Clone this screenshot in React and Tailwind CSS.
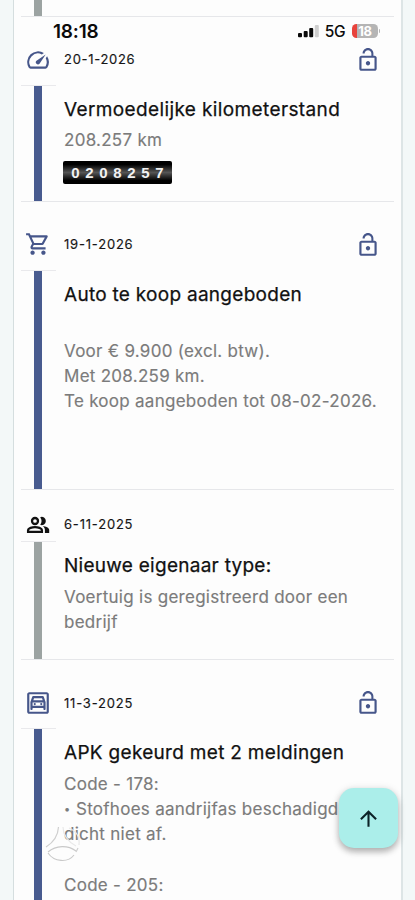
import React from "react";
import {
  MdSpeed,
  MdOutlineShoppingCart,
  MdOutlineGarage,
  MdLockOpen,
  MdArrowUpward,
} from "react-icons/md";

function PeopleIcon({ className }) {
  return (
    <svg viewBox="0 0 24 24" className={className} fill="none">
      <circle cx="9" cy="8" r="3" stroke="#111" strokeWidth="2.3" />
      <path d="M2.100 18.900V17c0-1.900 4.200-2.900 6.900-2.900s6.900 1 6.900 2.900v1.900z" stroke="#111" strokeWidth="2.300" />
      <path d="M14.200 4.200A4.100 4.100 0 1 1 14.200 11.800a6.500 6.500 0 0 0 0-7.600z" fill="#111" />
      <path d="M16.700 13c3 .4 6.500 1.800 6.500 4v3.100h-4.300V17c0-1.700-.9-3-2.200-4z" fill="#111" />
    </svg>
  );
}

function StatusBar() {
  return (
    <div className="absolute left-[53px] top-[19px] flex h-6 w-[327px] items-center justify-between">
      <span className="pt-px text-[19px] font-semibold leading-6 tracking-[-0.2px] text-[#0b0b0b]">18:18</span>
      <div className="flex items-center">
        <svg width="21" height="14" viewBox="0 0 21 14" className="mr-[6px]">
          <rect x="0" y="9" width="4" height="4.2" rx="1" fill="#0b0b0b" />
          <rect x="5.7" y="7" width="4" height="6.2" rx="1" fill="#0b0b0b" />
          <rect x="11.2" y="4" width="4" height="9.2" rx="1" fill="#0b0b0b" />
          <rect x="16.8" y="1" width="4" height="12.2" rx="1" fill="#cfcfcf" />
        </svg>
        <span className="mr-[7px] pt-px text-[15.5px] font-medium leading-6 tracking-[-0.5px] text-[#0b0b0b]">5G</span>
        <div className="flex h-[14px] w-[26px] items-center justify-center rounded-[4.5px] bg-[linear-gradient(90deg,#e8433c_5px,#b5b5b5_5px)] text-[13px] font-bold leading-none tracking-[-0.3px] text-white">
          18
        </div>
        <div className="ml-px h-1 w-px rounded-r bg-[#b5b5b5]" />
      </div>
    </div>
  );
}

function Entry({ Icon, iconClass, date, dateClass, lockClass, header, height, bar, title, titleClass, children }) {
  return (
    <section>
      <div className={`flex ${header}`}>
        <div className="flex w-[35px] items-center justify-center border-b border-[#e9e9ec]">
          <Icon className={iconClass} />
        </div>
        <div className="flex flex-1 items-center justify-between pl-2 pr-[13px]">
          <span className={`relative text-[13px] text-[#161616] [-webkit-text-stroke:0.15px_#161616] ${dateClass}`}>{date}</span>
          {lockClass && <MdLockOpen className={`relative size-[26px] text-[#46568a] ${lockClass}`} />}
        </div>
      </div>
      <div className={`flex border-b border-[#e6e7ea] ${height}`}>
        <div className={`ml-[13px] w-2 shrink-0 ${bar}`} />
        <div className="flex-1 whitespace-nowrap pl-[22px] pt-[11px]">
          <h2 className={`text-[19px] leading-[26px] text-[#111] [-webkit-text-stroke:0.25px_#111] ${titleClass}`}>{title}</h2>
          {children}
        </div>
      </div>
    </section>
  );
}

const body = "text-[17px] leading-[25.2px] tracking-[0.27px] text-[#7b7b7b] [-webkit-text-stroke:0.15px_#7b7b7b]";

export default function App() {
  return (
    <div className="relative h-[900px] w-[415px] overflow-hidden bg-[#f3f8f8] font-['Inter',sans-serif]">
      <main className="ml-[13px] h-full w-[390px] overflow-hidden border-l border-r-2 border-l-[#d5dedf] border-r-[#dde5e6] bg-[#fdfdfd] pl-[7px] pr-[7px]">
        <div className="h-[17px] border-b border-[#e6e7ea]">
          <div className="ml-[13px] h-4 w-2 bg-[#9ca3a2]" />
        </div>
        <Entry
          Icon={MdSpeed}
          iconClass="relative -left-px top-[9px] size-[26px] text-[#46568a]"
          date="20-1-2026"
          dateClass="top-2 tracking-[0.7px]"
          header="h-[69px]"
          lockClass="top-[8px]"
          height="h-[116px]"
          bar="bg-[#485b8f]"
          title="Vermoedelijke kilometerstand"
          titleClass="tracking-[0.38px]"
        >
          <p className={`mt-[5px] ${body}`}>208.257 km</p>
          <div className="-ml-px mt-[8px] flex h-[23px] w-[109px] items-center justify-center rounded-[2px] bg-[linear-gradient(180deg,#000_15%,#555_50%,#000_85%)] font-['Liberation_Sans',sans-serif] text-[15px] font-bold leading-none text-[#f2f2f2]">
            {"0208257".split("").map((d, i) => (
              <span key={i} className="w-[14px] text-center">{d}</span>
            ))}
          </div>
        </Entry>
        <Entry
          Icon={MdOutlineShoppingCart}
          iconClass="relative -left-px top-[8px] size-[26px] text-[#46568a]"
          date="19-1-2026"
          dateClass="top-2 tracking-[0.8px]"
          header="h-[69px]"
          lockClass="top-[8px]"
          height="h-[219px]"
          bar="bg-[#485b8f]"
          title="Auto te koop aangeboden"
          titleClass="tracking-[0.28px]"
        >
          <div className={`mt-[31px] ${body}`}>
            <p>Voor € 9.900 (excl. btw).</p>
            <p>Met 208.259 km.</p>
            <p>Te koop aangeboden tot 08-02-2026.</p>
          </div>
        </Entry>
        <Entry
          Icon={PeopleIcon}
          iconClass="relative -left-px top-[9px] size-6"
          date="6-11-2025"
          dateClass="top-[9px] tracking-[0.8px]"
          header="h-[52px]"
          height="h-[118px]"
          bar="bg-[#9ca3a2]"
          title="Nieuwe eigenaar type:"
          titleClass="tracking-[0.27px]"
        >
          <div className={`mt-[6px] ${body}`}>
            <p>Voertuig is geregistreerd door een</p>
            <p>bedrijf</p>
          </div>
        </Entry>
        <Entry
          Icon={MdOutlineGarage}
          iconClass="relative -left-px top-[9px] size-[26px] text-[#46568a]"
          date="11-3-2025"
          dateClass="top-[9px] tracking-[0.8px]"
          header="h-[69px]"
          lockClass="top-[8px]"
          height="h-[240px]"
          bar="bg-[#485b8f]"
          title="APK gekeurd met 2 meldingen"
          titleClass="tracking-[0.3px]"
        >
          <div className={`mt-[6px] ${body}`}>
            <p>Code - 178:</p>
            <p className="flex items-center">
              <span className="w-3 text-[11px] leading-none">•</span>
              <span>Stofhoes aandrijfas beschadigd</span>
            </p>
            <p>dicht niet af.</p>
            <p className="mt-[25.2px]">Code - 205:</p>
          </div>
        </Entry>
      </main>
      <StatusBar />
      <svg className="absolute left-[40px] top-[815px]" width="50" height="50" viewBox="0 0 50 50" fill="none">
        <path d="M18.500 12C18 21 14 27 6 32" stroke="#cfcfcf" strokeWidth="1.2" />
        <path d="M8 37C16 30 28 30 36 36M8 38C14 47 28 48 34 40" stroke="#c9c9c9" strokeWidth="1.1" />
        <path d="M36 37l2-4" stroke="#d0d0d0" strokeWidth="1.2" />
        <path d="M23 12c0 8 4 14 13 19M29 13c7 3 11 9 10 17" stroke="#e9e9e9" strokeWidth="1.2" />
      </svg>
      <button className="absolute left-[339px] top-[788px] flex h-[60px] w-[59px] items-center justify-center rounded-[15px] bg-[#abeeea] shadow-[0_4px_6px_rgba(0,0,0,0.25),0_1px_8px_rgba(0,0,0,0.12)]">
        <MdArrowUpward className="size-[25px] text-[#0c2328]" />
      </button>
    </div>
  );
}
